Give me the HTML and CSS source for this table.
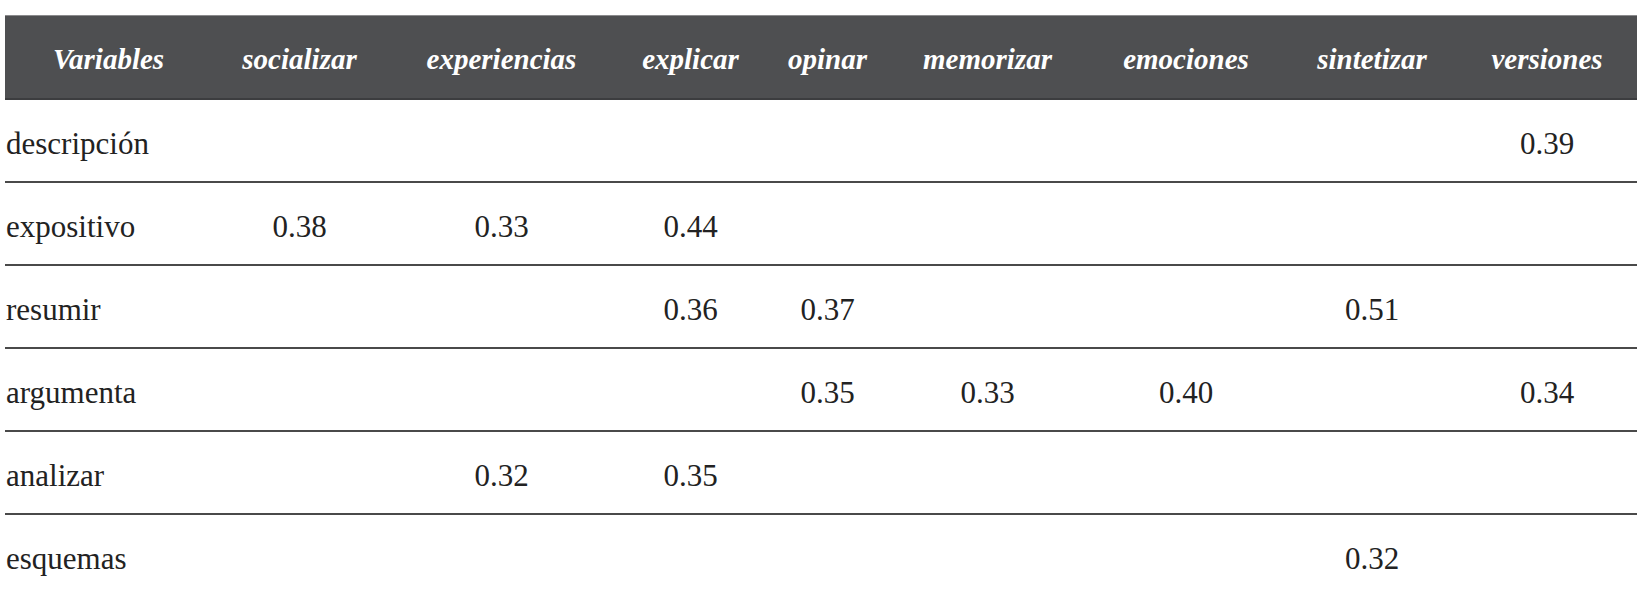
FILE: index.html
```html
<!DOCTYPE html>
<html lang="es">
<head>
<meta charset="utf-8">
<title>Tabla</title>
<link rel="stylesheet" href="styles.css">
</head>
<body>
<table class="corr">
  <colgroup>
    <col class="c1"><col class="c2"><col class="c3"><col class="c4"><col class="c5"><col class="c6"><col class="c7"><col class="c8"><col class="c9">
  </colgroup>
  <thead>
    <tr>
      <th>Variables</th><th>socializar</th><th>experiencias</th><th>explicar</th><th>opinar</th><th>memorizar</th><th>emociones</th><th>sintetizar</th><th>versiones</th>
    </tr>
  </thead>
  <tbody>
    <tr><td class="lbl">descripción</td><td></td><td></td><td></td><td></td><td></td><td></td><td></td><td>0.39</td></tr>
    <tr><td class="lbl">expositivo</td><td>0.38</td><td>0.33</td><td>0.44</td><td></td><td></td><td></td><td></td><td></td></tr>
    <tr><td class="lbl">resumir</td><td></td><td></td><td>0.36</td><td>0.37</td><td></td><td></td><td>0.51</td><td></td></tr>
    <tr><td class="lbl">argumenta</td><td></td><td></td><td></td><td>0.35</td><td>0.33</td><td>0.40</td><td></td><td>0.34</td></tr>
    <tr><td class="lbl">analizar</td><td></td><td>0.32</td><td>0.35</td><td></td><td></td><td></td><td></td><td></td></tr>
    <tr class="last"><td class="lbl">esquemas</td><td></td><td></td><td></td><td></td><td></td><td></td><td>0.32</td><td></td></tr>
  </tbody>
</table>
</body>
</html>
```

FILE: styles.css
```css
html, body {
  margin: 0;
  padding: 0;
  background: #ffffff;
}
body {
  padding: 15px 0 0 5px;
  font-family: "Liberation Serif", "Times New Roman", serif;
  color: #222222;
  overflow: hidden;
}
.corr {
  border-collapse: collapse;
  table-layout: fixed;
  width: 1632px;
}
.c1 { width: 207px; }
.c2 { width: 175px; }
.c3 { width: 229px; }
.c4 { width: 149px; }
.c5 { width: 125px; }
.c6 { width: 195px; }
.c7 { width: 202px; }
.c8 { width: 170px; }
.c9 { width: 180px; }
.corr th {
  background: #4e4f51;
  color: #ffffff;
  font-size: 29px;
  font-weight: bold;
  font-style: italic;
  height: 83px;
  padding: 6px 0 0 0;
  box-sizing: border-box;
  text-align: center;
  vertical-align: middle;
  border-top: 1px solid #8a8a8c;
  border-bottom: 2px solid #3c3d3f;
}
.corr td {
  font-size: 31px;
  height: 83px;
  padding: 7px 0 0 0;
  box-sizing: border-box;
  text-align: center;
  vertical-align: middle;
  border-bottom: 2px solid #4a4a4a;
}
.corr td.lbl {
  text-align: left;
  padding-left: 1px;
}
.corr tr.last td {
  border-bottom: none;
}
```
